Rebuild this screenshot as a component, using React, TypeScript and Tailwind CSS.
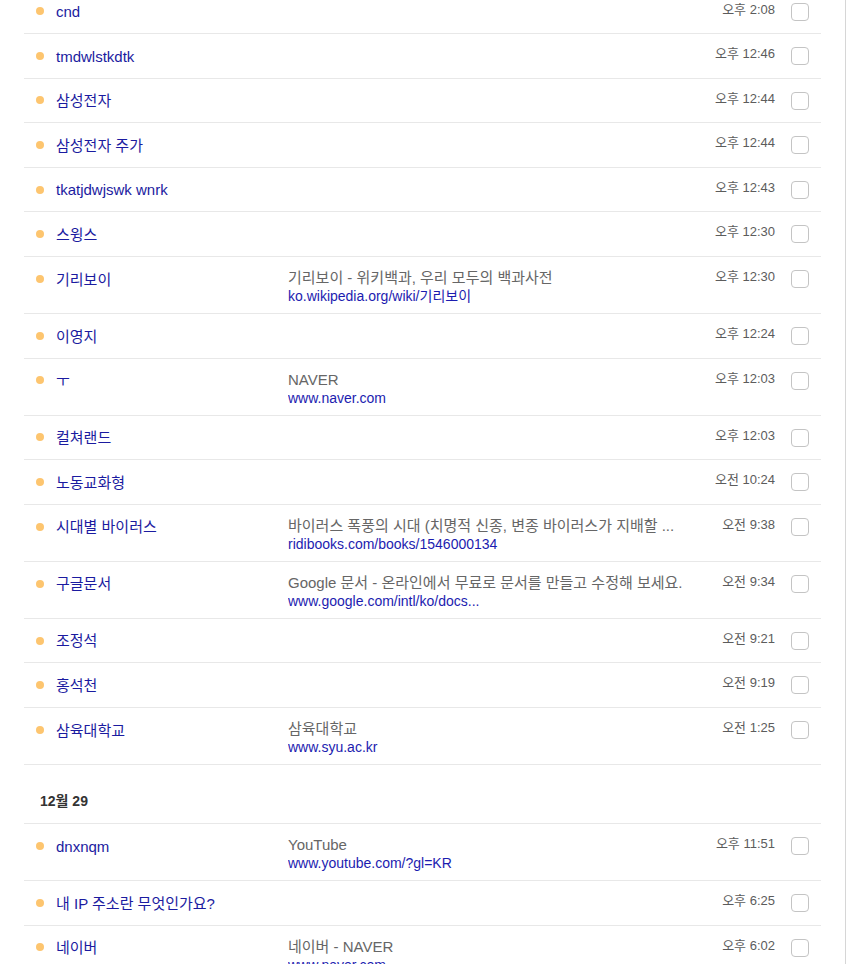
type Entry = {
  title: string
  time: string
  sub?: string
  url?: string
}

type Group = {
  label?: string
  items: Entry[]
}

const groups: Group[] = [
  {
    items: [
      { title: 'cnd', time: '오후 2:08' },
      { title: 'tmdwlstkdtk', time: '오후 12:46' },
      { title: '삼성전자', time: '오후 12:44' },
      { title: '삼성전자 주가', time: '오후 12:44' },
      { title: 'tkatjdwjswk wnrk', time: '오후 12:43' },
      { title: '스윙스', time: '오후 12:30' },
      {
        title: '기리보이',
        time: '오후 12:30',
        sub: '기리보이 - 위키백과, 우리 모두의 백과사전',
        url: 'ko.wikipedia.org/wiki/기리보이',
      },
      { title: '이영지', time: '오후 12:24' },
      { title: 'ㅜ', time: '오후 12:03', sub: 'NAVER', url: 'www.naver.com' },
      { title: '컬쳐랜드', time: '오후 12:03' },
      { title: '노동교화형', time: '오전 10:24' },
      {
        title: '시대별 바이러스',
        time: '오전 9:38',
        sub: '바이러스 폭풍의 시대 (치명적 신종, 변종 바이러스가 지배할 ...',
        url: 'ridibooks.com/books/1546000134',
      },
      {
        title: '구글문서',
        time: '오전 9:34',
        sub: 'Google 문서 - 온라인에서 무료로 문서를 만들고 수정해 보세요.',
        url: 'www.google.com/intl/ko/docs...',
      },
      { title: '조정석', time: '오전 9:21' },
      { title: '홍석천', time: '오전 9:19' },
      { title: '삼육대학교', time: '오전 1:25', sub: '삼육대학교', url: 'www.syu.ac.kr' },
    ],
  },
  {
    label: '12월 29',
    items: [
      { title: 'dnxnqm', time: '오후 11:51', sub: 'YouTube', url: 'www.youtube.com/?gl=KR' },
      { title: '내 IP 주소란 무엇인가요?', time: '오후 6:25' },
      { title: '네이버', time: '오후 6:02', sub: '네이버 - NAVER', url: 'www.naver.com' },
    ],
  },
]

function Row({ item }: { item: Entry }) {
  return (
    <div className="flex items-start pl-[12px] pr-[12px] pt-[9px] pb-[9px] border-b border-[#e8e8e8]">
      {/* Dot + title */}
      <div className="flex items-center w-[252px] shrink-0 h-[25.6px]">
        <span className="w-[8px] h-[8px] rounded-full bg-[#fdc56f] shrink-0" />
        <span className="ml-[12px] mt-[1px] text-[15px] leading-[25.6px] text-[#1b1ba0] whitespace-nowrap">
          {item.title}
        </span>
      </div>

      {/* Page title + url */}
      <div className="flex-1 min-w-0 overflow-hidden translate-y-[1.5px]">
        {item.sub && (
          <>
            <div className="text-[15px] leading-[19px] text-[#666] whitespace-nowrap">{item.sub}</div>
            <div className="text-[14px] leading-[19px] text-[#1c1cb0] whitespace-nowrap">{item.url}</div>
          </>
        )}
      </div>

      {/* Time */}
      <div className="w-[80px] shrink-0 translate-y-[1px] text-right text-[13px] leading-[19px] text-[#5c5c5c] whitespace-nowrap">
        {item.time}
      </div>

      {/* Checkbox */}
      <div className="ml-[16px] mt-[4px] w-[18px] h-[18px] shrink-0 rounded-[4px] border border-[#c4c4c4] bg-white" />
    </div>
  )
}

export default function App() {
  return (
    <div
      className="w-[846px] min-h-screen bg-white border-r border-[#d6d6d6] overflow-hidden"
      style={{ fontFamily: "'Liberation Sans', 'Noto Sans CJK KR', sans-serif" }}
    >
      <div className="px-[24px] mt-[-10.5px]">
        {groups.map((g, gi) => (
          <div key={gi}>
            {g.label && (
              <div className="pl-[16px] pt-[26px] pb-[12px] text-[14px] leading-[20px] font-bold text-[#333] border-b border-[#e8e8e8]">
                {g.label}
              </div>
            )}
            {g.items.map((item, i) => (
              <Row key={i} item={item} />
            ))}
          </div>
        ))}
      </div>
    </div>
  )
}
